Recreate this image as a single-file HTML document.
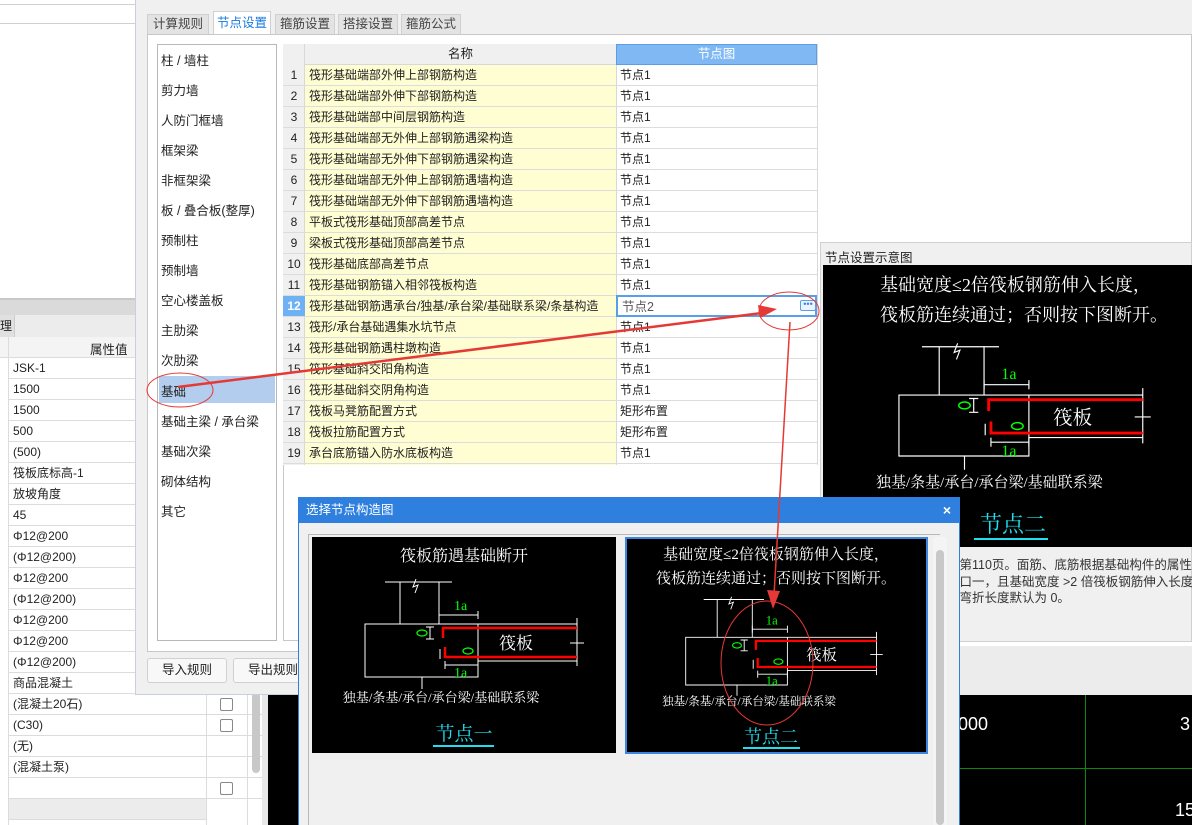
<!DOCTYPE html>
<html><head><meta charset="utf-8">
<style>
*{margin:0;padding:0;box-sizing:border-box}
body{width:1192px;height:825px;overflow:hidden;position:relative;background:#f0f0f0;font-family:"Liberation Sans","Noto Sans CJK SC",sans-serif;font-size:12px;color:#222}
.a{position:absolute}
.row{position:absolute;left:0;height:21px;line-height:20px;border-bottom:1px solid #dcdcdc;white-space:nowrap}
.li{position:absolute;left:4px;font-size:12px;color:#222}
.cb{position:absolute;width:13px;height:13px;border:1px solid #888;border-radius:2px;background:#fff}
.tab{position:absolute;top:14px;height:20px;line-height:19px;text-align:center;background:#e3e3e3;border:1px solid #d0d0d0;border-bottom:none;color:#444;font-size:12.5px}
svg text{font-family:"Liberation Serif","Noto Serif CJK SC",serif}
</style></head><body>

<div class="a" style="left:0;top:0;width:135px;height:298px;background:#fff"></div>
<div class="a" style="left:0;top:4px;width:135px;height:1px;background:#d0d0d0"></div>
<div class="a" style="left:0;top:23px;width:135px;height:1px;background:#d0d0d0"></div>
<div class="a" style="left:0;top:298px;width:135px;height:2px;background:#c8c8c8"></div>
<div class="a" style="left:0;top:300px;width:135px;height:15px;background:#dadada"></div>
<div class="a" style="left:0;top:315px;width:135px;height:22px;background:#ececec"></div>
<div class="a" style="left:0;top:315px;width:15px;height:22px;background:#e0e0e0;border-right:1px solid #ccc;line-height:22px">理</div>
<div class="a" style="left:0;top:337px;width:262px;height:488px;background:#fff"></div>
<div class="a" style="left:0;top:337px;width:262px;height:21px;background:#f4f4f4;border-bottom:1px solid #dcdcdc"></div>
<div class="a" style="left:90px;top:339px;font-size:12.5px">属性值</div>
<div class="a" style="left:8px;top:337px;width:1px;height:488px;background:#dcdcdc"></div>
<div class="a" style="left:206px;top:692px;width:1px;height:133px;background:#dcdcdc"></div>
<div class="a" style="left:247px;top:692px;width:1px;height:133px;background:#dcdcdc"></div>
<div class="a" style="left:9px;top:358px;width:253px;height:467px">
 <div class="row" style="top:0;width:253px"><span class="li">JSK-1</span></div>
 <div class="row" style="top:21px;width:253px"><span class="li">1500</span></div>
 <div class="row" style="top:42px;width:253px"><span class="li">1500</span></div>
 <div class="row" style="top:63px;width:253px"><span class="li">500</span></div>
 <div class="row" style="top:84px;width:253px"><span class="li">(500)</span></div>
 <div class="row" style="top:105px;width:253px"><span class="li">筏板底标高-1</span></div>
 <div class="row" style="top:126px;width:253px"><span class="li">放坡角度</span></div>
 <div class="row" style="top:147px;width:253px"><span class="li">45</span></div>
 <div class="row" style="top:168px;width:253px"><span class="li">Φ12@200</span></div>
 <div class="row" style="top:189px;width:253px"><span class="li">(Φ12@200)</span></div>
 <div class="row" style="top:210px;width:253px"><span class="li">Φ12@200</span></div>
 <div class="row" style="top:231px;width:253px"><span class="li">(Φ12@200)</span></div>
 <div class="row" style="top:252px;width:253px"><span class="li">Φ12@200</span></div>
 <div class="row" style="top:273px;width:253px"><span class="li">Φ12@200</span></div>
 <div class="row" style="top:294px;width:253px"><span class="li">(Φ12@200)</span></div>
 <div class="row" style="top:315px;width:253px"><span class="li">商品混凝土</span></div>
 <div class="row" style="top:336px;width:253px"><span class="li">(混凝土20石)</span></div>
 <div class="row" style="top:357px;width:253px"><span class="li">(C30)</span></div>
 <div class="row" style="top:378px;width:253px"><span class="li">(无)</span></div>
 <div class="row" style="top:399px;width:253px"><span class="li">(混凝土泵)</span></div>
 <div class="row" style="top:420px;width:253px"></div>
 <div class="row" style="top:441px;width:197px;background:#ececec"></div>
</div>
<div class="cb" style="left:220px;top:698px"></div>
<div class="cb" style="left:220px;top:719px"></div>
<div class="cb" style="left:220px;top:782px"></div>
<div class="a" style="left:252px;top:692px;width:8px;height:81px;background:#c8c8c8;border-radius:4px"></div>
<div class="a" style="left:262px;top:692px;width:6px;height:133px;background:#e8e8e8"></div>
<div class="a" style="left:268px;top:692px;width:30px;height:133px;background:#000"></div>

<div class="a" style="left:135px;top:0;width:1057px;height:695px;background:#f0f0f0;border-left:1px solid #c8d0dc;border-bottom:1px solid #c8d0dc"></div>
<div class="tab" style="left:147px;width:62px">计算规则</div>
<div class="tab" style="left:213px;top:11px;height:24px;line-height:23px;width:58px;background:#fff;color:#1a7ae0">节点设置</div>
<div class="tab" style="left:275px;width:60px">箍筋设置</div>
<div class="tab" style="left:338px;width:60px">搭接设置</div>
<div class="tab" style="left:401px;width:60px">箍筋公式</div>
<div class="a" style="left:147px;top:34px;width:1045px;height:618px;background:#fff;border:1px solid #c8c8c8"></div>
<div class="a" style="left:157px;top:44px;width:120px;height:597px;border:1px solid #b8b8b8;background:#fff"></div>
<div class="a" style="left:159px;top:376px;width:116px;height:27px;background:#b3cdee"></div>
<div class="a" style="left:161px;top:46px;line-height:30.05px;font-size:12.5px">柱 / 墙柱<br>剪力墙<br>人防门框墙<br>框架梁<br>非框架梁<br>板 / 叠合板(整厚)<br>预制柱<br>预制墙<br>空心楼盖板<br>主肋梁<br>次肋梁<br>基础<br>基础主梁 / 承台梁<br>基础次梁<br>砌体结构<br>其它</div>
<div class="a" style="left:283px;top:44px;width:535px;height:597px;border:1px solid #c8c8c8;border-right:none;background:#fff"></div>
<div class="a" style="left:283px;top:44px;width:22px;height:421px;background:#f0f0f0;border-right:1px solid #d8d8d8"></div>
<div class="a" style="left:305px;top:44px;width:311px;height:21px;background:#f0f0f0;border-bottom:1px solid #d8d8d8;text-align:center;line-height:20px;font-size:12.5px">名称</div>
<div class="a" style="left:616px;top:44px;width:201px;height:21px;background:#80b8f4;border:1px solid #5a9ee8;text-align:center;line-height:19px;color:#fff;font-size:12.5px">节点图</div>
<div class="a" style="left:305px;top:65px;width:311px;height:400px;background:#fffdd2"></div>
<div class="a" style="left:616px;top:65px;width:1px;height:400px;background:#d8d8d8"></div>
<div class="a" style="left:817px;top:44px;width:1px;height:421px;background:#d8d8d8"></div>
<div class="a" style="left:283px;top:65px;width:534px;font-size:12.5px">
<div class="row" style="top:0;width:534px"><span class="li" style="left:0;width:22px;text-align:center">1</span><span class="li" style="left:26px">筏形基础端部外伸上部钢筋构造</span><span class="li" style="left:337px">节点1</span></div>
<div class="row" style="top:21px;width:534px"><span class="li" style="left:0;width:22px;text-align:center">2</span><span class="li" style="left:26px">筏形基础端部外伸下部钢筋构造</span><span class="li" style="left:337px">节点1</span></div>
<div class="row" style="top:42px;width:534px"><span class="li" style="left:0;width:22px;text-align:center">3</span><span class="li" style="left:26px">筏形基础端部中间层钢筋构造</span><span class="li" style="left:337px">节点1</span></div>
<div class="row" style="top:63px;width:534px"><span class="li" style="left:0;width:22px;text-align:center">4</span><span class="li" style="left:26px">筏形基础端部无外伸上部钢筋遇梁构造</span><span class="li" style="left:337px">节点1</span></div>
<div class="row" style="top:84px;width:534px"><span class="li" style="left:0;width:22px;text-align:center">5</span><span class="li" style="left:26px">筏形基础端部无外伸下部钢筋遇梁构造</span><span class="li" style="left:337px">节点1</span></div>
<div class="row" style="top:105px;width:534px"><span class="li" style="left:0;width:22px;text-align:center">6</span><span class="li" style="left:26px">筏形基础端部无外伸上部钢筋遇墙构造</span><span class="li" style="left:337px">节点1</span></div>
<div class="row" style="top:126px;width:534px"><span class="li" style="left:0;width:22px;text-align:center">7</span><span class="li" style="left:26px">筏形基础端部无外伸下部钢筋遇墙构造</span><span class="li" style="left:337px">节点1</span></div>
<div class="row" style="top:147px;width:534px"><span class="li" style="left:0;width:22px;text-align:center">8</span><span class="li" style="left:26px">平板式筏形基础顶部高差节点</span><span class="li" style="left:337px">节点1</span></div>
<div class="row" style="top:168px;width:534px"><span class="li" style="left:0;width:22px;text-align:center">9</span><span class="li" style="left:26px">梁板式筏形基础顶部高差节点</span><span class="li" style="left:337px">节点1</span></div>
<div class="row" style="top:189px;width:534px"><span class="li" style="left:0;width:22px;text-align:center">10</span><span class="li" style="left:26px">筏形基础底部高差节点</span><span class="li" style="left:337px">节点1</span></div>
<div class="row" style="top:210px;width:534px"><span class="li" style="left:0;width:22px;text-align:center">11</span><span class="li" style="left:26px">筏形基础钢筋锚入相邻筏板构造</span><span class="li" style="left:337px">节点1</span></div>
<div class="row" style="top:231px;width:534px"><span class="li" style="left:0;width:22px;text-align:center;background:#6fb1f5;color:#fff;font-weight:bold;height:20px">12</span><span class="li" style="left:26px">筏形基础钢筋遇承台/独基/承台梁/基础联系梁/条基构造</span><span style="position:absolute;left:333px;top:-1px;width:201px;height:22px;border:2px solid #5a9ee8;background:#fff;padding-left:4px;color:#555">节点2<span style="position:absolute;left:182px;top:3px;width:16px;height:11px;border:1px solid #5a9ee8;border-radius:2px;background:#eaf3fe;font-size:9px;line-height:6px;text-align:center;color:#3a86e0">•••</span></span></div>
<div class="row" style="top:252px;width:534px"><span class="li" style="left:0;width:22px;text-align:center">13</span><span class="li" style="left:26px">筏形/承台基础遇集水坑节点</span><span class="li" style="left:337px">节点1</span></div>
<div class="row" style="top:273px;width:534px"><span class="li" style="left:0;width:22px;text-align:center">14</span><span class="li" style="left:26px">筏形基础钢筋遇柱墩构造</span><span class="li" style="left:337px">节点1</span></div>
<div class="row" style="top:294px;width:534px"><span class="li" style="left:0;width:22px;text-align:center">15</span><span class="li" style="left:26px">筏形基础斜交阳角构造</span><span class="li" style="left:337px">节点1</span></div>
<div class="row" style="top:315px;width:534px"><span class="li" style="left:0;width:22px;text-align:center">16</span><span class="li" style="left:26px">筏形基础斜交阴角构造</span><span class="li" style="left:337px">节点1</span></div>
<div class="row" style="top:336px;width:534px"><span class="li" style="left:0;width:22px;text-align:center">17</span><span class="li" style="left:26px">筏板马凳筋配置方式</span><span class="li" style="left:337px">矩形布置</span></div>
<div class="row" style="top:357px;width:534px"><span class="li" style="left:0;width:22px;text-align:center">18</span><span class="li" style="left:26px">筏板拉筋配置方式</span><span class="li" style="left:337px">矩形布置</span></div>
<div class="row" style="top:378px;width:534px"><span class="li" style="left:0;width:22px;text-align:center">19</span><span class="li" style="left:26px">承台底筋锚入防水底板构造</span><span class="li" style="left:337px">节点1</span></div>
</div>

<div class="a" style="left:147px;top:658px;width:80px;height:25px;border:1px solid #d0d0d0;border-radius:3px;background:#f8f8f8;text-align:center;line-height:23px;font-size:12.5px">导入规则</div>
<div class="a" style="left:233px;top:658px;width:80px;height:25px;border:1px solid #d0d0d0;border-radius:3px;background:#f8f8f8;text-align:center;line-height:23px;font-size:12.5px">导出规则</div>

<div class="a" style="left:820px;top:242px;width:372px;height:400px;background:#f0f0f0;border:1px solid #d0d0d0"></div>
<div class="a" style="left:825px;top:247px;font-size:12.5px">节点设置示意图</div>
<div class="a" style="left:823px;top:265px;width:369px;height:282px;background:#000"></div>
<div class="a" style="left:947px;top:557px;font-size:12.5px;line-height:16.5px;color:#333;white-space:nowrap">遍第110页。面筋、底筋根据基础构件的属性是<br>口口一，且基础宽度 &gt;2 倍筏板钢筋伸入长度时<br>弯弯折长度默认为 0。</div>
<div class="a" style="left:823px;top:642px;width:369px;height:4px;background:#fff"></div>
<div class="a" style="left:823px;top:646px;width:369px;height:49px;background:#ececec"></div>
<div class="a" style="left:823px;top:695px;width:369px;height:130px;background:#000"></div>
<div class="a" style="left:1085px;top:695px;width:1px;height:130px;background:#0a8a0a"></div>
<div class="a" style="left:823px;top:768px;width:369px;height:1px;background:#0a8a0a"></div>
<div class="a" style="left:958px;top:714px;color:#fff;font-size:18px">000</div>
<div class="a" style="left:1180px;top:714px;color:#fff;font-size:18px">3</div>
<div class="a" style="left:1175px;top:800px;color:#fff;font-size:18px">15</div>

<svg class="a" style="left:0;top:0" width="1192" height="825">
<defs>
<g id="dg" fill="none" stroke-width="1">
 <path d="M73 45H140M88 45V87M127 45V87M53 87H166V140H53ZM166 87H265M166 124H265M265 81V129M258 106H272M110 140V152" stroke="#fff"/>
 <path d="M104 42l-3 8 5-2-3 8" stroke="#fff"/>
 <path d="M127 78H166M127 74V82M166 74V82M133 128H166M133 124V132M166 124V132M118 90V102M114 90H122M114 102H122M128 112V122" stroke="#fff"/>
 <path d="M131 101V91H265M133 110V120H265" stroke="#f00" stroke-width="2.5"/>
 <ellipse cx="110" cy="96" rx="5" ry="3" stroke="#0f0" stroke-width="1.3"/>
 <ellipse cx="156" cy="114" rx="5" ry="3" stroke="#0f0" stroke-width="1.3"/>
 <text x="142" y="73" fill="#0f0" stroke="none" font-size="14" font-family="Liberation Mono,monospace">1a</text>
 <text x="142" y="140" fill="#0f0" stroke="none" font-size="14" font-family="Liberation Mono,monospace">1a</text>
 <text x="187" y="112" fill="#fff" stroke="none" font-size="17">筏板</text>
</g>
</defs>
</svg>

<div class="a" style="left:298px;top:497px;width:662px;height:328px;background:#f0f0f0;border-left:1px solid #2f7fdc;border-right:1px solid #2f7fdc"></div>
<div class="a" style="left:298px;top:497px;width:662px;height:26px;background:#2f80de;color:#fff;font-size:12.5px;line-height:26px;padding-left:8px">选择节点构造图<span style="position:absolute;right:9px;top:0;font-size:14px;font-weight:bold">×</span></div>
<div class="a" style="left:308px;top:534px;width:632px;height:291px;border-top:1px solid #b8b8b8;border-left:1px solid #b8b8b8"></div>
<div class="a" style="left:933px;top:537px;width:14px;height:288px;background:#f4f4f4"></div>
<div class="a" style="left:936px;top:550px;width:8px;height:275px;background:#c8c8c8;border-radius:4px"></div>
<div class="a" style="left:312px;top:537px;width:304px;height:216px;background:#000"></div>
<div class="a" style="left:625px;top:537px;width:303px;height:217px;background:#000;border:2px solid #3a86e0"></div>

<svg class="a" style="left:0;top:0" width="1192" height="825">
 <g transform="translate(312,537)">
  <text x="152" y="24" fill="#fff" font-size="16" text-anchor="middle">筏板筋遇基础断开</text>
  <use href="#dg"/>
  <text x="129" y="165" fill="#fff" font-size="13" text-anchor="middle">独基/条基/承台/承台梁/基础联系梁</text>
  <text x="152" y="203" fill="#1ee0f0" font-size="19" text-anchor="middle">节点一</text>
  <line x1="121" y1="209" x2="182" y2="209" stroke="#1ee0f0" stroke-width="2"/>
 </g>
 <g transform="translate(625,537)">
  <text x="151" y="22" fill="#fff" font-size="15" text-anchor="middle">基础宽度≤2倍筏板钢筋伸入长度，</text>
  <text x="151" y="46" fill="#fff" font-size="15" text-anchor="middle">筏板筋连续通过；否则按下图断开。</text>
  <g transform="translate(13,22) scale(0.9)"><use href="#dg"/></g>
  <text x="124" y="168" fill="#fff" font-size="11.5" text-anchor="middle">独基/条基/承台/承台梁/基础联系梁</text>
  <text x="146" y="206" fill="#1ee0f0" font-size="18" text-anchor="middle">节点二</text>
  <line x1="118" y1="211" x2="175" y2="211" stroke="#1ee0f0" stroke-width="2"/>
 </g>
 <g transform="translate(823,265)">
  <text x="57" y="26" fill="#fff" font-size="18">基础宽度≤2倍筏板钢筋伸入长度，</text>
  <text x="57" y="56" fill="#fff" font-size="18">筏板筋连续通过；否则按下图断开。</text>
  <g transform="translate(15,30) scale(1.15)"><use href="#dg"/></g>
  <text x="53" y="222" fill="#fff" font-size="15">独基/条基/承台/承台梁/基础联系梁</text>
  <text x="190" y="267" fill="#1ee0f0" font-size="22" text-anchor="middle">节点二</text>
  <line x1="151" y1="274" x2="225" y2="274" stroke="#1ee0f0" stroke-width="2"/>
 </g>
 <g fill="none" stroke="#e53935">
  <ellipse cx="180" cy="390" rx="33" ry="17" stroke-width="1"/>
  <ellipse cx="789" cy="311" rx="30" ry="19" stroke-width="1"/>
  <ellipse cx="767" cy="663" rx="46" ry="62" stroke-width="1"/>
  <line x1="178" y1="387" x2="762" y2="313" stroke-width="2.5"/>
  <line x1="790" y1="322" x2="774" y2="595" stroke-width="1.5"/>
 </g>
 <path d="M777 309L758 305L760 318Z" fill="#e53935"/>
 <path d="M773 609L767 590L780 591Z" fill="#e53935"/>
</svg>
</body></html>
